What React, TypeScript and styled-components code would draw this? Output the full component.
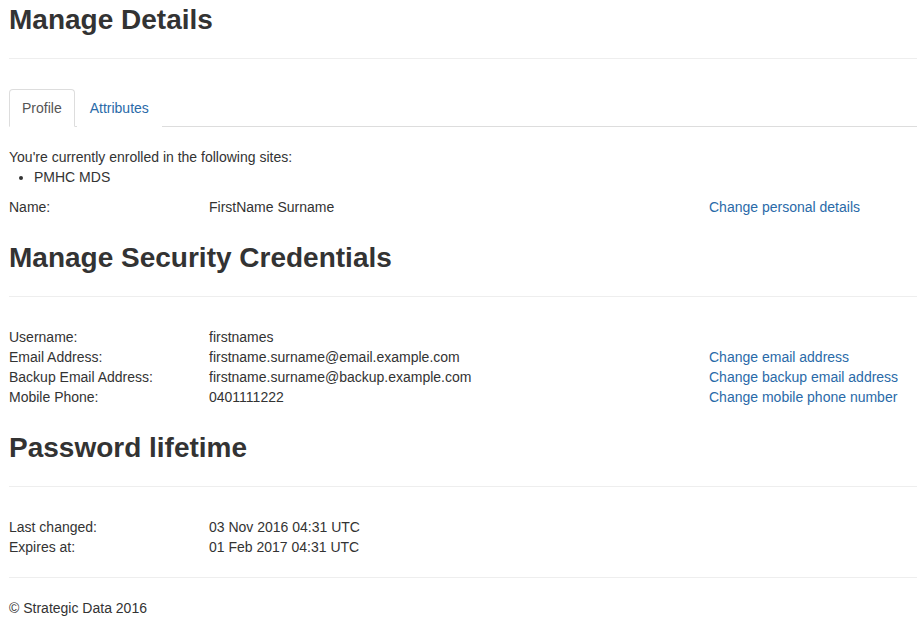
import * as React from "react";
import styled, { createGlobalStyle } from "styled-components";

const GlobalStyle = createGlobalStyle`
  html, body {
    margin: 0;
    padding: 0;
    background: #fff;
  }
  body {
    font-family: "Liberation Sans", Arial, Helvetica, sans-serif;
    font-size: 14px;
    line-height: 20px;
    color: #333;
  }
`;

interface IRow {
  label: string;
  value: string;
  action?: string;
}

const credentials: IRow[] = [
  { label: "Username:", value: "firstnames" },
  {
    label: "Email Address:",
    value: "firstname.surname@email.example.com",
    action: "Change email address",
  },
  {
    label: "Backup Email Address:",
    value: "firstname.surname@backup.example.com",
    action: "Change backup email address",
  },
  {
    label: "Mobile Phone:",
    value: "0401111222",
    action: "Change mobile phone number",
  },
];

const lifetime: IRow[] = [
  { label: "Last changed:", value: "03 Nov 2016 04:31 UTC" },
  { label: "Expires at:", value: "01 Feb 2017 04:31 UTC" },
];

const App: React.FunctionComponent = () => {
  const [tab, setTab] = React.useState("profile");

  const renderRows = (rows: IRow[]) =>
    rows.map((r) => (
      <Row key={r.label}>
        <span>{r.label}</span>
        <span>{r.value}</span>
        {r.action ? <Link href="#">{r.action}</Link> : <span />}
      </Row>
    ));

  return (
    <Page>
      <GlobalStyle />
      <PageHeader $first>Manage Details</PageHeader>

      <Tabs>
        <Tab $active={tab === "profile"} onClick={() => setTab("profile")}>
          Profile
        </Tab>
        <Tab
          $active={tab === "attributes"}
          onClick={() => setTab("attributes")}
        >
          Attributes
        </Tab>
      </Tabs>

      <TabBody>
        <Para>You're currently enrolled in the following sites:</Para>
        <Sites>
          <li>PMHC MDS</li>
        </Sites>
        <Row>
          <span>Name:</span>
          <span>FirstName Surname</span>
          <Link href="#">Change personal details</Link>
        </Row>
      </TabBody>

      <PageHeader>Manage Security Credentials</PageHeader>
      <Rows>{renderRows(credentials)}</Rows>

      <PageHeader>Password lifetime</PageHeader>
      <Rows>{renderRows(lifetime)}</Rows>

      <Footer>© Strategic Data 2016</Footer>
    </Page>
  );
};

export default App;

const linkColor = "#2a6aa8";

const Page = styled.div`
  padding: 0 0 13px 9px;
`;

const PageHeader = styled.h1<{ $first?: boolean }>`
  margin: ${(p) => (p.$first ? "4px" : "25px")} 0 0;
  padding-bottom: 23px;
  border-bottom: 1px solid #eee;
  font-size: 28px;
  line-height: 31px;
  font-weight: bold;
  color: #333;
`;

const Tabs = styled.ul`
  display: flex;
  list-style: none;
  margin: 30px 0 0;
  padding: 0;
  border-bottom: 1px solid #ddd;
`;

const Tab = styled.li<{ $active?: boolean }>`
  margin: 0 2px -1px 0;
  padding: 8px 12px;
  line-height: 20px;
  cursor: pointer;
  border: 1px solid ${(p) => (p.$active ? "#ddd" : "transparent")};
  border-bottom-color: ${(p) => (p.$active ? "#fff" : "transparent")};
  border-radius: 4px 4px 0 0;
  background: #fff;
  color: ${(p) => (p.$active ? "#555" : linkColor)};
`;

const TabBody = styled.div`
  padding-top: 20px;
`;

const Para = styled.p`
  margin: 0;
`;

const Sites = styled.ul`
  margin: 0 0 10px;
  padding-left: 25px;
`;

const Rows = styled.div`
  margin-top: 30px;
`;

const Row = styled.div`
  display: grid;
  grid-template-columns: 200px 500px 1fr;
  line-height: 20px;
`;

const Link = styled.a`
  color: ${linkColor};
  text-decoration: none;
`;

const Footer = styled.footer`
  margin-top: 20px;
  padding-top: 20px;
  border-top: 1px solid #eee;
`;
